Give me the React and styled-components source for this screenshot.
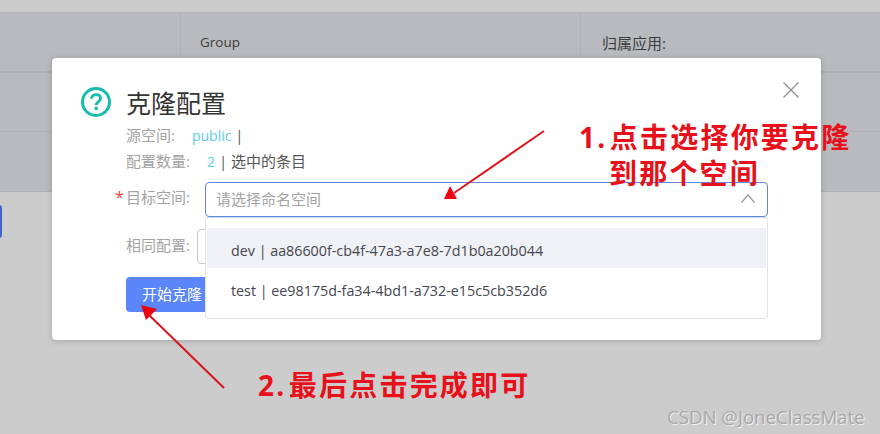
import React from 'react';
import styled, { createGlobalStyle } from 'styled-components';

const SANS = '"Open Sans", "Noto Sans CJK SC", sans-serif';

const GlobalStyle = createGlobalStyle`
  html, body {
    margin: 0;
    padding: 0;
    background: #cccccc;
  }
  * {
    box-sizing: border-box;
  }
`;

const Page = styled.div`
  position: relative;
  width: 880px;
  height: 434px;
  overflow: hidden;
  padding-top: 12px;
  background: #cccccc;
  font-family: ${SANS};
`;

const Table = styled.div`
  border-top: 1px solid #b5b5b5;
`;

const TableRow = styled.div`
  display: grid;
  grid-template-columns: 180px 400px 300px;
  height: ${(props) => props.height}px;
  background: #b9babd;
  border-bottom: ${(props) => props.thick ? '2px solid #afb0b3' : '1px solid #b0b1b4'};
`;

const TableCell = styled.div`
  display: flex;
  align-items: center;
  padding-left: ${(props) => props.pad || 0}px;
  font-size: ${(props) => props.size || 14}px;
  color: #3c3d40;
  border-left: ${(props) => props.first ? 'none' : '1px solid #b0b1b4'};
`;

const SideButton = styled.div`
  position: absolute;
  left: -6px;
  top: 205px;
  width: 8px;
  height: 33px;
  border-radius: 3px;
  background: #4264c8;
`;

const Modal = styled.div`
  position: absolute;
  left: 52px;
  top: 58px;
  width: 769px;
  height: 282px;
  padding: 27px 53px 0 29px;
  background: #ffffff;
  border-radius: 4px;
  box-shadow: 0 1px 6px rgba(0, 0, 0, 0.2);
`;

const CloseButton = styled.svg`
  position: absolute;
  right: 22px;
  top: 24px;
  width: 16px;
  height: 16px;
`;

const Header = styled.div`
  display: flex;
  align-items: center;
  column-gap: 15px;
  height: 34px;
`;

const Title = styled.h2`
  margin: 0;
  padding-top: 2px;
  font-size: 25px;
  font-weight: 400;
  line-height: 34px;
  color: #333333;
`;

const Meta = styled.div`
  margin-left: 45px;
  height: 26px;
  margin-top: ${(props) => props.first ? '3px' : '0'};
  font-size: 15px;
  line-height: 26px;
  color: #a3a3a3;
  white-space: nowrap;
`;

const MetaValue = styled.span`
  margin-left: 17px;
  font-size: 14px;
  color: #5ad0de;
`;

const MetaNote = styled.span`
  color: #555555;
`;

const FormRow = styled.div`
  display: flex;
  align-items: center;
  height: 35px;
  margin-top: ${(props) => props.top}px;
`;

const Label = styled.label`
  width: 109px;
  padding-bottom: ${(props) => props.lift}px;
  font-size: 15px;
  text-align: right;
  color: #a3a3a3;
  white-space: nowrap;
`;

const Required = styled.span`
  margin-right: 2px;
  font-size: 17px;
  line-height: 1;
  color: #e84a4a;
`;

const SelectBox = styled.div`
  display: flex;
  align-items: center;
  justify-content: space-between;
  width: 563px;
  height: 35px;
  margin-left: 15px;
  padding: 0 12px 2px 10px;
  background: #ffffff;
  border: 1px solid #6285d8;
  border-radius: 4px;
  font-size: 15px;
  color: #a3a3a3;
`;

const Radio = styled.div`
  width: 60px;
  height: 35px;
  margin-left: 7px;
  background: #ffffff;
  border: 1px solid #c8c8c8;
  border-radius: 4px;
`;

const PrimaryButton = styled.button`
  display: block;
  width: 100px;
  height: 35px;
  margin: 13px 0 0 45px;
  padding: 0 0 2px 16px;
  border: none;
  border-radius: 4px;
  background: #5a86fa;
  color: #ffffff;
  font-family: inherit;
  font-size: 15px;
  text-align: left;
`;

const Dropdown = styled.div`
  position: absolute;
  left: 153px;
  top: 159px;
  width: 563px;
  height: 102px;
  padding: 10px 1px 0;
  background: #ffffff;
  border: 1px solid #e2e3e6;
  border-top-color: #c9dcf8;
  border-radius: 4px;
`;

const Option = styled.div`
  height: 40px;
  padding-left: 24px;
  font-size: 14.3px;
  line-height: 46px;
  color: #444650;
  background: ${(props) => props.active ? '#f0f1f5' : '#ffffff'};
  white-space: nowrap;
`;

const Overlay = styled.svg`
  position: absolute;
  left: 0;
  top: 0;
  width: 880px;
  height: 434px;
  pointer-events: none;
`;

const Note = styled.div`
  position: absolute;
  left: ${(props) => props.x}px;
  top: ${(props) => props.y}px;
  font-size: 28px;
  font-weight: 700;
  line-height: 36px;
  letter-spacing: 2.2px;
  word-spacing: -7px;
  color: #e8101a;
  white-space: pre;
`;

const NoteLine = styled.div`
  padding-left: ${(props) => props.indent || 0}px;
`;

const Watermark = styled.div`
  position: absolute;
  left: 667px;
  top: 406px;
  font-size: 18.6px;
  line-height: 22px;
  color: #a8a8a8;
  text-shadow: 1px 1px 0 #f0f0f0;
  white-space: nowrap;
`;

const HelpIcon = () => (
  <svg width="30" height="30" viewBox="1 1 30 30">
    <circle cx="16" cy="16" r="13.5" fill="none" stroke="#16bcae" strokeWidth="3" />
    <path
      d="M11.6 12.8c0-2.6 1.9-4.2 4.5-4.2s4.4 1.5 4.4 3.8c0 3.4-4.3 3.4-4.3 6.6"
      fill="none"
      stroke="#16bcae"
      strokeWidth="2.8"
    />
    <circle cx="16.2" cy="22.4" r="1.8" fill="#16bcae" />
  </svg>
);

const App = () => {
  return (
    <Page>
      <GlobalStyle />
      <Table>
        <TableRow height={60} thick>
          <TableCell first />
          <TableCell pad={19} size={13.5}>Group</TableCell>
          <TableCell pad={21} size={15}>归属应用:</TableCell>
        </TableRow>
        <TableRow height={59}>
          <TableCell first />
          <TableCell />
          <TableCell />
        </TableRow>
        <TableRow height={60}>
          <TableCell first />
          <TableCell />
          <TableCell />
        </TableRow>
      </Table>
      <SideButton />

      <Modal>
        <CloseButton viewBox="0 0 16 16">
          <path d="M0.5 0.5L15.5 15.5M15.5 0.5L0.5 15.5" stroke="#8f8f8f" strokeWidth="1.2" fill="none" />
        </CloseButton>
        <Header>
          <HelpIcon />
          <Title>克隆配置</Title>
        </Header>
        <Meta first>
          源空间:<MetaValue>public</MetaValue> <MetaNote>|</MetaNote>
        </Meta>
        <Meta>
          配置数量:<MetaValue>2</MetaValue> <MetaNote>| 选中的条目</MetaNote>
        </Meta>
        <FormRow top={8}>
          <Label lift={6}>
            <Required>*</Required>目标空间:
          </Label>
          <SelectBox>
            <span>请选择命名空间</span>
            <svg width="14" height="9" viewBox="0 0 14 9">
              <path d="M0.5 8.5L7 1L13.5 8.5" stroke="#9a9a9a" strokeWidth="1.2" fill="none" />
            </svg>
          </SelectBox>
        </FormRow>
        <FormRow top={12}>
          <Label lift={4}>相同配置:</Label>
          <Radio />
        </FormRow>
        <PrimaryButton>开始克隆</PrimaryButton>
        <Dropdown>
          <Option active>dev | aa86600f-cb4f-47a3-a7e8-7d1b0a20b044</Option>
          <Option>test | ee98175d-fa34-4bd1-a732-e15c5cb352d6</Option>
        </Dropdown>
      </Modal>

      <Overlay viewBox="0 0 880 434">
        <path d="M544 131L454 193" stroke="#e0141c" strokeWidth="2" fill="none" />
        <polygon points="450,186 444,199 457,199" fill="#f00010" />
        <path d="M224 388L149 315" stroke="#d8141c" strokeWidth="2" fill="none" />
        <polygon points="141,305 146,320 157,309" fill="#f00010" />
      </Overlay>

      <Note x={579} y={119}>
        <NoteLine>1. 点击选择你要克隆</NoteLine>
        <NoteLine indent={30}>到那个空间</NoteLine>
      </Note>
      <Note x={258} y={367}>
        <NoteLine>2. 最后点击完成即可</NoteLine>
      </Note>
      <Watermark>CSDN @JoneClassMate</Watermark>
    </Page>
  );
};

export default App;
